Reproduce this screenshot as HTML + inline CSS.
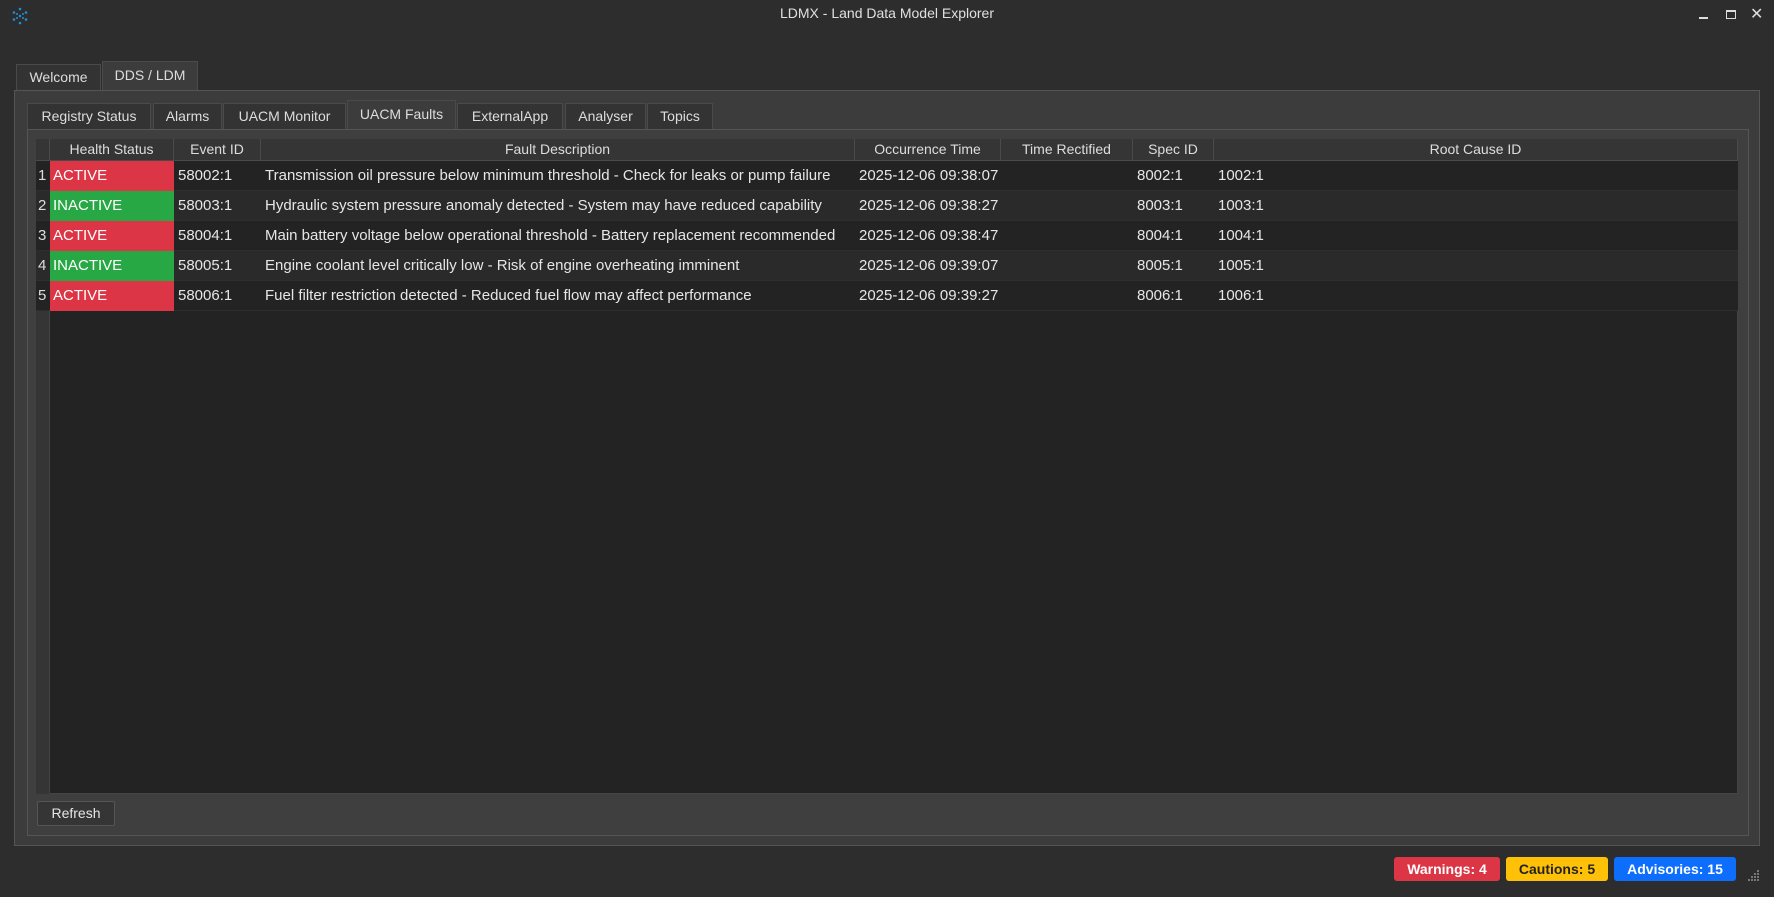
<!DOCTYPE html>
<html><head><meta charset="utf-8"><style>
*{box-sizing:border-box;margin:0;padding:0}
body{width:1774px;height:897px;background:#2d2d2d;font-family:"Liberation Sans",sans-serif;font-size:14px;color:#e6e6e6;position:relative;overflow:hidden}
.a{position:absolute}
.tab{position:absolute;border:1px solid #4a4a4a;border-bottom:none;background:#333;color:#ddd;text-align:center;font-size:14px}
.hdr{position:absolute;top:139px;height:22px;background:#353535;border-right:1px solid #4a4a4a;border-bottom:1px solid #4a4a4a;text-align:center;line-height:21px;font-size:14px;color:#ddd}
.row{position:absolute;left:36px;width:1702px;height:30px;border-bottom:1px solid #2e2e2e}
.c{position:absolute;top:0;height:30px;line-height:30px;padding-left:4px;white-space:nowrap;font-size:15px}
.badge{position:absolute;top:857px;height:24px;border-radius:3px;font-weight:bold;text-align:center;line-height:24px;font-size:14px}
</style></head><body>
<div class="a" style="left:10px;top:6px;width:20px;height:20px">
<svg width="20" height="20" viewBox="0 0 20 20"><g fill="#1e90d8"><circle cx="10" cy="3" r="1.3"/><circle cx="16" cy="6.5" r="1.3"/><circle cx="16" cy="13.5" r="1.3"/><circle cx="10" cy="17" r="1.3"/><circle cx="4" cy="13.5" r="1.3"/><circle cx="4" cy="6.5" r="1.3"/><circle cx="10" cy="10" r="1.3"/><circle cx="7" cy="8" r="1"/><circle cx="13" cy="8" r="1"/><circle cx="7" cy="12" r="1"/><circle cx="13" cy="12" r="1"/></g></svg></div>
<div class="a" style="left:0;width:1774px;top:5px;text-align:center;font-size:14px;color:#e0e0e0">LDMX - Land Data Model Explorer</div>
<div class="a" style="left:1699px;top:17px;width:9px;height:2px;background:#ddd"></div>
<div class="a" style="left:1726px;top:10px;width:10px;height:9px;border:1px solid #ddd;border-top-width:2px"></div>
<div class="a" style="left:1750px;top:4px;font-size:16px;color:#ddd">✕</div>

<div class="tab" style="left:16px;top:64px;width:85px;height:26px;line-height:25px">Welcome</div>
<div class="tab" style="left:102px;top:61px;width:96px;height:30px;line-height:27px;background:#3c3c3c">DDS / LDM</div>
<div class="a" style="left:14px;top:90px;width:1746px;height:756px;background:#3c3c3c;border:1px solid #555"></div>

<div class="tab" style="left:27px;top:103px;width:124px;height:26px;line-height:25px">Registry Status</div>
<div class="tab" style="left:153px;top:103px;width:69px;height:26px;line-height:25px">Alarms</div>
<div class="tab" style="left:223px;top:103px;width:123px;height:26px;line-height:25px">UACM Monitor</div>
<div class="tab" style="left:347px;top:100px;width:109px;height:30px;line-height:27px;background:#3c3c3c">UACM Faults</div>
<div class="tab" style="left:457px;top:103px;width:106px;height:26px;line-height:25px">ExternalApp</div>
<div class="tab" style="left:565px;top:103px;width:81px;height:26px;line-height:25px">Analyser</div>
<div class="tab" style="left:647px;top:103px;width:66px;height:26px;line-height:25px">Topics</div>
<div class="a" style="left:27px;top:129px;width:1722px;height:707px;border:1px solid #555;background:#3f3f3f"></div>

<div class="a" style="left:36px;top:139px;width:1702px;height:655px;background:#232323;border:1px solid #444"></div>
<div class="a" style="left:36px;top:161px;width:14px;height:633px;background:#353535;border-right:1px solid #444"></div>
<div class="hdr" style="left:36px;width:14px"></div>
<div class="hdr" style="left:50px;width:124px">Health Status</div>
<div class="hdr" style="left:174px;width:87px">Event ID</div>
<div class="hdr" style="left:261px;width:594px">Fault Description</div>
<div class="hdr" style="left:855px;width:146px">Occurrence Time</div>
<div class="hdr" style="left:1001px;width:132px">Time Rectified</div>
<div class="hdr" style="left:1133px;width:81px">Spec ID</div>
<div class="hdr" style="left:1214px;width:524px">Root Cause ID</div>

<div class="row" style="top:161px;background:#232323">
<div class="c" style="left:0;width:14px;padding-left:2px;color:#ddd">1</div>
<div class="c" style="left:14px;width:124px;background:#dc3545;color:#fff;padding-left:3px">ACTIVE</div>
<div class="c" style="left:138px">58002:1</div><div class="c" style="left:225px">Transmission oil pressure below minimum threshold - Check for leaks or pump failure</div>
<div class="c" style="left:819px">2025-12-06 09:38:07</div><div class="c" style="left:1097px">8002:1</div><div class="c" style="left:1178px">1002:1</div></div>
<div class="row" style="top:191px;background:#2a2a2a">
<div class="c" style="left:0;width:14px;padding-left:2px;color:#ddd">2</div>
<div class="c" style="left:14px;width:124px;background:#28a745;color:#fff;padding-left:3px">INACTIVE</div>
<div class="c" style="left:138px">58003:1</div><div class="c" style="left:225px">Hydraulic system pressure anomaly detected - System may have reduced capability</div>
<div class="c" style="left:819px">2025-12-06 09:38:27</div><div class="c" style="left:1097px">8003:1</div><div class="c" style="left:1178px">1003:1</div></div>
<div class="row" style="top:221px;background:#232323">
<div class="c" style="left:0;width:14px;padding-left:2px;color:#ddd">3</div>
<div class="c" style="left:14px;width:124px;background:#dc3545;color:#fff;padding-left:3px">ACTIVE</div>
<div class="c" style="left:138px">58004:1</div><div class="c" style="left:225px">Main battery voltage below operational threshold - Battery replacement recommended</div>
<div class="c" style="left:819px">2025-12-06 09:38:47</div><div class="c" style="left:1097px">8004:1</div><div class="c" style="left:1178px">1004:1</div></div>
<div class="row" style="top:251px;background:#2a2a2a">
<div class="c" style="left:0;width:14px;padding-left:2px;color:#ddd">4</div>
<div class="c" style="left:14px;width:124px;background:#28a745;color:#fff;padding-left:3px">INACTIVE</div>
<div class="c" style="left:138px">58005:1</div><div class="c" style="left:225px">Engine coolant level critically low - Risk of engine overheating imminent</div>
<div class="c" style="left:819px">2025-12-06 09:39:07</div><div class="c" style="left:1097px">8005:1</div><div class="c" style="left:1178px">1005:1</div></div>
<div class="row" style="top:281px;background:#232323">
<div class="c" style="left:0;width:14px;padding-left:2px;color:#ddd">5</div>
<div class="c" style="left:14px;width:124px;background:#dc3545;color:#fff;padding-left:3px">ACTIVE</div>
<div class="c" style="left:138px">58006:1</div><div class="c" style="left:225px">Fuel filter restriction detected - Reduced fuel flow may affect performance</div>
<div class="c" style="left:819px">2025-12-06 09:39:27</div><div class="c" style="left:1097px">8006:1</div><div class="c" style="left:1178px">1006:1</div></div>

<div class="a" style="left:37px;top:801px;width:78px;height:25px;background:#353535;border:1px solid #555;border-radius:2px;text-align:center;line-height:23px">Refresh</div>

<div class="badge" style="left:1394px;width:106px;background:#dc3545;color:#fff">Warnings: 4</div>
<div class="badge" style="left:1506px;width:102px;background:#ffc107;color:#222">Cautions: 5</div>
<div class="badge" style="left:1614px;width:122px;background:#0d6efd;color:#fff">Advisories: 15</div>
<svg class="a" style="left:1748px;top:870px" width="12" height="12"><g fill="#777"><rect x="9" y="0" width="2" height="2"/><rect x="6" y="3" width="2" height="2"/><rect x="9" y="3" width="2" height="2"/><rect x="3" y="6" width="2" height="2"/><rect x="6" y="6" width="2" height="2"/><rect x="9" y="6" width="2" height="2"/><rect x="0" y="9" width="2" height="2"/><rect x="3" y="9" width="2" height="2"/><rect x="6" y="9" width="2" height="2"/><rect x="9" y="9" width="2" height="2"/></g></svg>
</body></html>
